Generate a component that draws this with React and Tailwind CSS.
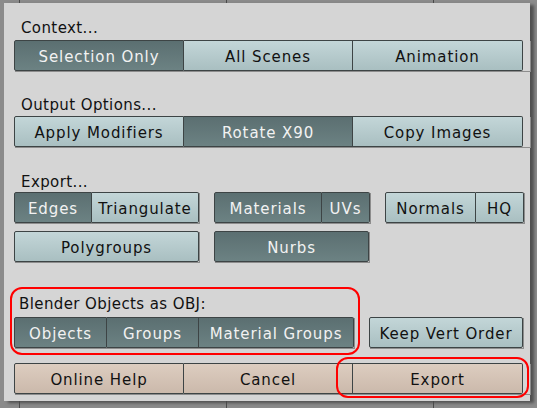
const tones = {
  dark: "bg-gradient-to-b from-[#5b6f71] to-[#6c8283] text-[#f2f2f2]",
  light: "bg-gradient-to-b from-[#c3d6d8] to-[#a9bfc1] text-[#111]",
  tan: "bg-gradient-to-b from-[#ddcdc0] to-[#cbb9ab] text-[#111]",
};

const Btn = ({ label, tone = "light", w, first, last }) => (
  <div
    className={`flex h-[31px] items-center justify-center whitespace-nowrap border border-[#3d4445] pt-[3px] tracking-[0.9px] ${tones[tone]} ${
      first ? "rounded-l-[2px]" : "border-l-0"
    } ${last ? "rounded-r-[2px]" : ""}`}
    style={{ width: w }}
  >
    {label}
  </div>
);

// a row of buttons that sit flush against each other
const Group = ({ items }) => (
  <div className="flex shadow-[1px_1px_0_#8d8d8d]">
    {items.map(([label, tone, w], i) => (
      <Btn
        key={label}
        label={label}
        tone={tone}
        w={w}
        first={i === 0}
        last={i === items.length - 1}
      />
    ))}
  </div>
);

const Label = ({ children, className = "" }) => (
  <div className={`h-[18px] leading-[18px] tracking-[0.4px] text-[#111] ${className}`}>{children}</div>
);

// thin seams of the window behind the popup
const Seams = ({ h }) => (
  <div className="flex" style={{ height: h }}>
    <div className="w-[19px]" />
    <div className="w-px bg-[#4a4a4a]" />
    <div className="w-[206px]" />
    <div className="w-px bg-[#4a4a4a]" />
    <div className="w-[206px]" />
    <div className="w-px bg-[#4a4a4a]" />
  </div>
);

export default function App() {
  return (
    <div
      className="h-[408px] w-[537px] overflow-hidden bg-[#8b8b8b] text-[15px]"
      style={{ fontFamily: '"DejaVu Sans", "Liberation Sans", sans-serif' }}
    >
      <Seams h={3} />
      <div className="ml-[4px] flex h-[398px] w-[526px] flex-col bg-[#d5d5d5] pl-[10px] shadow-[4px_2px_3px_#4f4f4f]">
        <Label className="mt-[16px] pl-[7px]">Context...</Label>
        <div className="mt-[3px]">
          <Group
            items={[
              ["Selection Only", "dark", 170],
              ["All Scenes", "light", 169],
              ["Animation", "light", 170],
            ]}
          />
        </div>

        <Label className="mt-[25px] pl-[7px]">Output Options...</Label>
        <div className="mt-[2px]">
          <Group
            items={[
              ["Apply Modifiers", "light", 170],
              ["Rotate X90", "dark", 169],
              ["Copy Images", "light", 170],
            ]}
          />
        </div>

        <Label className="mt-[26px] pl-[7px]">Export...</Label>
        <div className="mt-[1px] flex gap-[15px]">
          <Group
            items={[
              ["Edges", "dark", 78],
              ["Triangulate", "light", 107],
            ]}
          />
          <Group
            items={[
              ["Materials", "dark", 108],
              ["UVs", "dark", 48],
            ]}
          />
          <Group
            items={[
              ["Normals", "light", 91],
              ["HQ", "light", 48],
            ]}
          />
        </div>
        <div className="mt-[8px] flex gap-[15px]">
          <Group items={[["Polygroups", "light", 185]]} />
          <Group items={[["Nurbs", "dark", 155]]} />
        </div>

        <div className="mt-[25px] flex items-end">
          <div className="-ml-[4px] rounded-[12px] border-2 border-[#f00] pb-[5px] pl-[2px] pr-[4px] pt-[6px]">
            <Label className="pl-[5px]">Blender Objects as OBJ:</Label>
            <div className="mt-[4px]">
              <Group
                items={[
                  ["Objects", "dark", 93],
                  ["Groups", "dark", 92],
                  ["Material Groups", "dark", 155],
                ]}
              />
            </div>
          </div>
          <div className="mb-[7px] ml-[9px]">
            <Group items={[["Keep Vert Order", "light", 154]]} />
          </div>
        </div>

        <div className="relative mt-[8px]">
          <Group
            items={[
              ["Online Help", "tan", 170],
              ["Cancel", "tan", 169],
              ["Export", "tan", 170],
            ]}
          />
          <div className="pointer-events-none absolute left-[322px] top-[-6px] h-[41px] w-[193px] rounded-[12px] border-2 border-[#f00]" />
        </div>
      </div>
      <Seams h={7} />
    </div>
  );
}
